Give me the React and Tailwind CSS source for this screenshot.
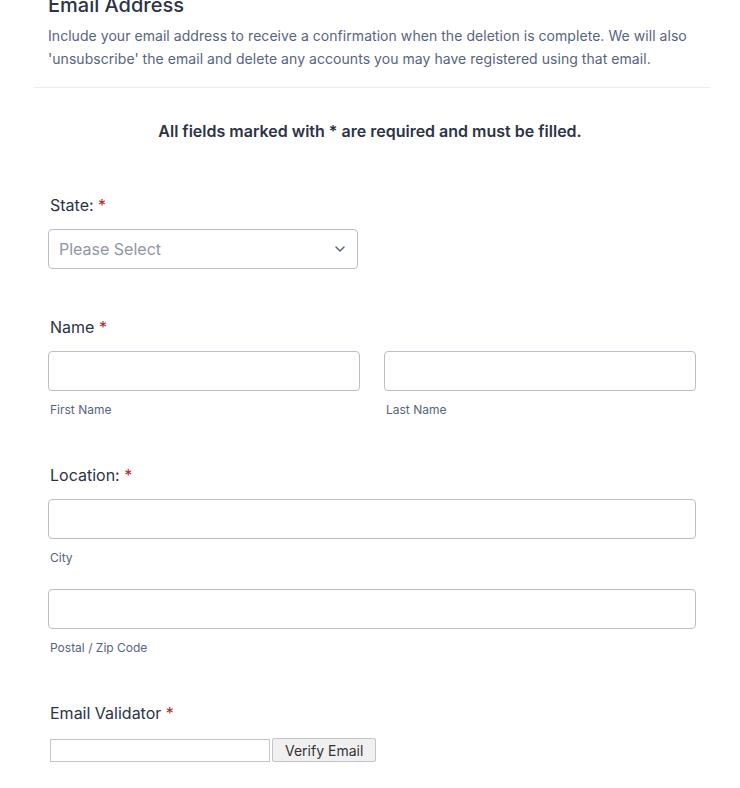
import { ChevronDown } from "lucide-react";

const font = { fontFamily: "Inter, 'Noto Sans', sans-serif" };

function Label({ children, className = "" }) {
  return (
    <div className={`text-[16px] font-normal text-[#2c3345] leading-5 ${className}`}>
      {children} <span className="text-[#b11f2a]">*</span>
    </div>
  );
}

function TextBox({ className = "" }) {
  return (
    <input
      type="text"
      className={`h-10 w-full rounded-[4px] border border-[#b8bdc9] bg-white px-2 outline-none ${className}`}
    />
  );
}

function Sub({ children }) {
  return <div className="mt-[11px] pl-[2px] text-[12px] leading-4 text-[#57647e]">{children}</div>;
}

export default function App() {
  return (
    <div className="w-[740px] h-[788px] overflow-hidden bg-white" style={font}>
      <div className="mt-[-7px] pl-[48px] pr-[44px]">
        <h2 className="text-[20px] font-medium leading-6 text-[#2c3345]">Email Address</h2>
        <p className="mt-[7px] text-[14px] leading-[23px] tracking-[0.05px] text-[#57647e]">
          Include your email address to receive a confirmation when the deletion is complete. We will also
          'unsubscribe' the email and delete any accounts you may have registered using that email.
        </p>
      </div>
      <div className="mx-[34px] mt-[17px] w-[676px] border-t border-[#ececef]"></div>

      <div className="mt-[33px] text-center text-[16px] font-semibold leading-5 text-[#2c3345]">
        All fields marked with * are required and must be filled.
      </div>

      <div className="pl-[48px] pr-[44px]">
        {/* state */}
        <Label className="mt-[54px] pl-[2px]">State:</Label>
        <div className="mt-[14px] flex h-10 w-[310px] items-center justify-between rounded-[4px] border border-[#b8bdc9] pl-[10px] pr-[9px]">
          <span className="text-[16px] text-[#8f96a3]">Please Select</span>
          <ChevronDown size={16} strokeWidth={2.2} className="text-[#57647e]" />
        </div>

        {/* name */}
        <Label className="mt-[48px] pl-[2px]">Name</Label>
        <div className="mt-[14px] grid grid-cols-2 gap-[24px]">
          <div>
            <TextBox />
            <Sub>First Name</Sub>
          </div>
          <div>
            <TextBox />
            <Sub>Last Name</Sub>
          </div>
        </div>

        {/* location */}
        <Label className="mt-[47px] pl-[2px]">Location:</Label>
        <div className="mt-[14px]">
          <TextBox />
          <Sub>City</Sub>
        </div>
        <div className="mt-[23px]">
          <TextBox />
          <Sub>Postal / Zip Code</Sub>
        </div>

        {/* validator */}
        <Label className="mt-[47px] pl-[2px]">Email Validator</Label>
        <div className="mt-[15px] flex items-center gap-[2px] pl-[2px]">
          <input
            type="text"
            className="h-[23px] w-[220px] border border-[#c4c4c4] bg-white outline-none"
          />
          <button className="h-[24px] rounded-[2px] border border-[#c4c4c4] bg-[#f0f0f0] px-[12px] text-[14px] text-[#333]">
            Verify Email
          </button>
        </div>
      </div>
    </div>
  );
}
